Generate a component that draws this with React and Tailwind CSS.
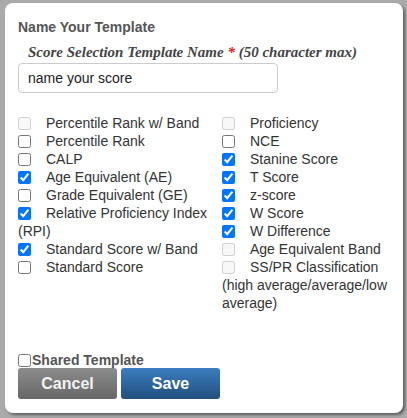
import React from 'react';

const left = [
    { label: 'Percentile Rank w/ Band', disabled: true },
    { label: 'Percentile Rank' },
    { label: 'CALP' },
    { label: 'Age Equivalent (AE)', checked: true },
    { label: 'Grade Equivalent (GE)' },
    { label: 'Relative Proficiency Index (RPI)', checked: true },
    { label: 'Standard Score w/ Band', checked: true },
    { label: 'Standard Score' },
];

const right = [
    { label: 'Proficiency', disabled: true },
    { label: 'NCE' },
    { label: 'Stanine Score', checked: true },
    { label: 'T Score', checked: true },
    { label: 'z-score', checked: true },
    { label: 'W Score', checked: true },
    { label: 'W Difference', checked: true },
    { label: 'Age Equivalent Band', disabled: true },
    { label: 'SS/PR Classification (high average/average/low average)', disabled: true },
];

function ScoreOption({ item }) {
    return (
        <div className="leading-[18px]">
            <input
                type="checkbox"
                defaultChecked={item.checked}
                disabled={item.disabled}
                className="m-0 mr-[15px] w-[13px] h-[13px] align-[-2px]"
            />
            <span>{item.label}</span>
        </div>
    );
}

export default function App() {
    return (
        <div className="w-[407px] h-[418px] bg-[#aaaaaa] pt-[3px] pl-[5px]">
            <div
                className="w-[398px] h-[410px] bg-white rounded-[8px] shadow-[2px_2px_3px_rgba(0,0,0,0.45)] pl-[13px] pr-[12px] pt-[16px] text-[#333]"
                style={{ fontFamily: '"Liberation Sans", Arial, sans-serif' }}
            >
                <h2 className="text-[14px] font-bold text-[#555] leading-[16px]">Name Your Template</h2>

                <label
                    className="block mt-[8px] ml-[10px] text-[15px] font-bold italic text-[#444] leading-[18px]"
                    style={{ fontFamily: '"Liberation Serif", Georgia, serif' }}
                >
                    Score Selection Template Name <span className="text-[#e02020]">*</span> (50 character max)
                </label>

                <input
                    type="text"
                    defaultValue="name your score"
                    className="block mt-[2px] w-[260px] h-[30px] border border-[#cccccc] rounded-[4px] px-[9px] text-[14px] text-[#222] outline-none"
                />

                <div className="grid grid-cols-[204px_1fr] mt-[21px] text-[14px]">
                    <div>
                        {left.map(item => <ScoreOption key={item.label} item={item} />)}
                    </div>
                    <div>
                        {right.map(item => <ScoreOption key={item.label} item={item} />)}
                    </div>
                </div>

                <div className="mt-[40px] flex items-center text-[14px] font-bold text-[#555] leading-[16px]">
                    <input type="checkbox" className="m-0 w-[13px] h-[13px]" />
                    <span className="ml-[1px]">Shared Template</span>
                </div>

                <div className="flex gap-[4px] mt-0">
                    <button className="w-[99px] h-[31px] rounded-[3px] bg-gradient-to-b from-[#8c8c8c] to-[#676767] text-[16px] font-bold text-[#f2f2f2]">
                        Cancel
                    </button>
                    <button className="w-[99px] h-[31px] rounded-[3px] bg-gradient-to-b from-[#3c7dc1] to-[#21507e] text-[16px] font-bold text-white">
                        Save
                    </button>
                </div>
            </div>
        </div>
    );
}
